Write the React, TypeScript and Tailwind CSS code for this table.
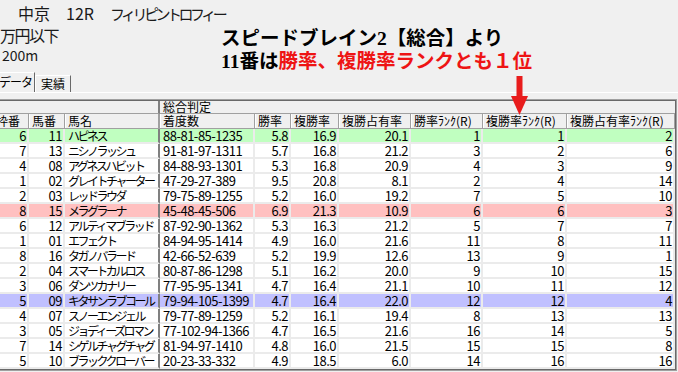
import React from 'react';

type Row = {
  waku: string;
  uma: string;
  name: string;
  chaku: string;
  win: string;
  place: string;
  share: string;
  winR: string;
  placeR: string;
  shareR: string;
  hl?: 'green' | 'pink' | 'blue';
};

const ROWS: Row[] = [
  { waku: '6', uma: '11', name: 'ハピネス', chaku: '88-81-85-1235', win: '5.8', place: '16.9', share: '20.1', winR: '1', placeR: '1', shareR: '2', hl: 'green' },
  { waku: '7', uma: '13', name: 'ニシノラッシュ', chaku: '91-81-97-1311', win: '5.7', place: '16.8', share: '21.2', winR: '3', placeR: '2', shareR: '6' },
  { waku: '4', uma: '08', name: 'アグネスハビット', chaku: '84-88-93-1301', win: '5.3', place: '16.8', share: '20.9', winR: '4', placeR: '3', shareR: '9' },
  { waku: '1', uma: '02', name: 'グレイトチャーター', chaku: '47-29-27-389', win: '9.5', place: '20.8', share: '8.1', winR: '2', placeR: '4', shareR: '14' },
  { waku: '2', uma: '03', name: 'レッドラウダ', chaku: '79-75-89-1255', win: '5.2', place: '16.0', share: '19.2', winR: '7', placeR: '5', shareR: '10' },
  { waku: '8', uma: '15', name: 'メラグラーナ', chaku: '45-48-45-506', win: '6.9', place: '21.3', share: '10.9', winR: '6', placeR: '6', shareR: '3', hl: 'pink' },
  { waku: '6', uma: '12', name: 'アルティマブラッド', chaku: '87-92-90-1362', win: '5.3', place: '16.3', share: '21.2', winR: '5', placeR: '7', shareR: '7' },
  { waku: '1', uma: '01', name: 'エフェクト', chaku: '84-94-95-1414', win: '4.9', place: '16.0', share: '21.6', winR: '11', placeR: '8', shareR: '11' },
  { waku: '8', uma: '16', name: 'タガノバラード', chaku: '42-66-52-639', win: '5.2', place: '19.9', share: '12.6', winR: '13', placeR: '9', shareR: '1' },
  { waku: '2', uma: '04', name: 'スマートカルロス', chaku: '80-87-86-1298', win: '5.1', place: '16.2', share: '20.0', winR: '9', placeR: '10', shareR: '15' },
  { waku: '3', uma: '06', name: 'ダンツカナリー', chaku: '77-95-95-1341', win: '4.7', place: '16.4', share: '21.1', winR: '10', placeR: '11', shareR: '12' },
  { waku: '5', uma: '09', name: 'キタサンラブコール', chaku: '79-94-105-1399', win: '4.7', place: '16.4', share: '22.0', winR: '12', placeR: '12', shareR: '4', hl: 'blue' },
  { waku: '4', uma: '07', name: 'スノーエンジェル', chaku: '79-77-89-1259', win: '5.2', place: '16.1', share: '19.4', winR: '8', placeR: '13', shareR: '13' },
  { waku: '3', uma: '05', name: 'ジョディーズロマン', chaku: '77-102-94-1366', win: '4.7', place: '16.5', share: '21.6', winR: '16', placeR: '14', shareR: '5' },
  { waku: '7', uma: '14', name: 'シゲルチャグチャグ', chaku: '81-94-97-1410', win: '4.8', place: '16.0', share: '21.5', winR: '15', placeR: '15', shareR: '8' },
  { waku: '5', uma: '10', name: 'ブラッククローバー', chaku: '20-23-33-332', win: '4.9', place: '18.5', share: '6.0', winR: '14', placeR: '16', shareR: '16' },
];

const GRID = 'grid grid-cols-[36px_36px_95px_95px_36px_48px_72px_72px_84px_108px]';

const HL = {
  green: 'bg-[#c0ffc0]',
  pink: 'bg-[#ffc0c0]',
  blue: 'bg-[#c0c0ff]',
};

// data cells
const cell = 'h-[15px] leading-[13px] border-r-2 border-b-2 border-b-[#ebebeb] whitespace-nowrap';
const num = `${cell} border-r-[#ebebeb] text-right pr-[1px] text-[13px] tracking-[-0.5px]`;
const txt = `${cell} border-r-[#ebebeb] pl-[3px] text-[13px] tracking-[-0.5px]`;
const frozen = `${cell} border-r-[#808080] pl-[3px] text-[12px] tracking-[-2.5px]`;

// header cells
const head = 'h-[15px] leading-[14px] pl-[3px] border-r border-b border-r-[#a0a0a0] border-b-[#a0a0a0] shadow-[inset_1px_0_0_#ffffff] whitespace-nowrap';

const App: React.FC = () => {
  return (
    <div className="relative w-[678px] h-[372px] overflow-hidden bg-[#f0f0f0] text-black font-['Noto_Sans_CJK_JP',sans-serif]">
      {/* Race title */}
      <div className="h-[25px] pt-[3px] pl-[18px] text-[16px] leading-[20px] text-[#1a1a1a] whitespace-nowrap">
        中京　12R　<span className="text-[15px] tracking-[-3.5px]">フィリピントロフィー</span>
      </div>

      <div className="flex h-[67px]">
        <div className="w-[221px] shrink-0">
          <div className="h-[20px] text-[16px] leading-[20px] tracking-[-1.5px] text-[#1a1a1a]">万円以下</div>
          <div className="h-[20px] pl-[2px] text-[14px] leading-[20px] text-[#1a1a1a]">200m</div>

          {/* Tabs */}
          <div className="flex items-end h-[20px] mt-[7px] text-[12px]">
            <div className="h-[20px] w-[37px] ml-[-2px] pl-[1px] border-t border-t-white border-r border-r-[#696969] leading-[18px] tracking-[-1px] whitespace-nowrap">
              データ
            </div>
            <div className="h-[17px] w-[36px] pl-[5px] border-l border-l-white border-t border-t-white border-r border-r-[#696969] leading-[16px]">
              実績
            </div>
          </div>
        </div>

        {/* Caption */}
        <div className="pt-[2px] text-[19.5px] leading-[23px] font-bold font-['Liberation_Serif','Noto_Sans_CJK_JP',serif] whitespace-nowrap">
          <div>スピードブレイン2【総合】より</div>
          <div>
            11番は<span className="text-[#ee1414]">勝率、複勝率ランクとも１位</span>
          </div>
        </div>
      </div>

      <div className="h-px bg-white" />
      <div className="h-[6px]" />

      {/* Grid */}
      <div className="ml-[-7px] w-[684px] border-t border-r border-b border-[#a0a0a0] bg-white text-[12px]">
        <div className="border-t border-r border-b border-[#696969]">
          <div className={`${GRID} bg-[#f0f0f0]`}>
            <div className="col-span-3 h-[13px] border-r-2 border-r-[#808080] border-b border-b-[#a0a0a0]" />
            <div className="col-span-7 h-[13px] leading-[12px] pl-[3px] border-b border-b-[#a0a0a0]">総合判定</div>
          </div>
          <div className={`${GRID} bg-[#f0f0f0]`}>
            <div className={`${head} pl-[2px]`}>枠番</div>
            <div className={head}>馬番</div>
            <div className={`${head} border-r-2 border-r-[#808080]`}>馬名</div>
            <div className={head}>着度数</div>
            <div className={head}>勝率</div>
            <div className={head}>複勝率</div>
            <div className={head}>複勝占有率</div>
            <div className={head}>勝率ﾗﾝｸ(R)</div>
            <div className={head}>複勝率ﾗﾝｸ(R)</div>
            <div className={head}>複勝占有率ﾗﾝｸ(R)</div>
          </div>

          {ROWS.map((r) => (
            <div key={r.uma} className={`${GRID} ${r.hl ? HL[r.hl] : 'bg-white'}`}>
              <div className={num}>{r.waku}</div>
              <div className={num}>{r.uma}</div>
              <div className={frozen}>{r.name}</div>
              <div className={txt}>{r.chaku}</div>
              <div className={num}>{r.win}</div>
              <div className={num}>{r.place}</div>
              <div className={num}>{r.share}</div>
              <div className={num}>{r.winR}</div>
              <div className={num}>{r.placeR}</div>
              <div className={num}>{r.shareR}</div>
            </div>
          ))}
        </div>
      </div>

      {/* Red arrow pointing at the column */}
      <svg className="absolute left-[510px] top-[76px]" width="19" height="40" viewBox="0 0 19 40">
        <rect x="6.5" y="0" width="6" height="21" fill="#e81c1c" />
        <polygon points="1,20 18,20 9.5,39" fill="#e81c1c" />
      </svg>
    </div>
  );
};

export default App;
